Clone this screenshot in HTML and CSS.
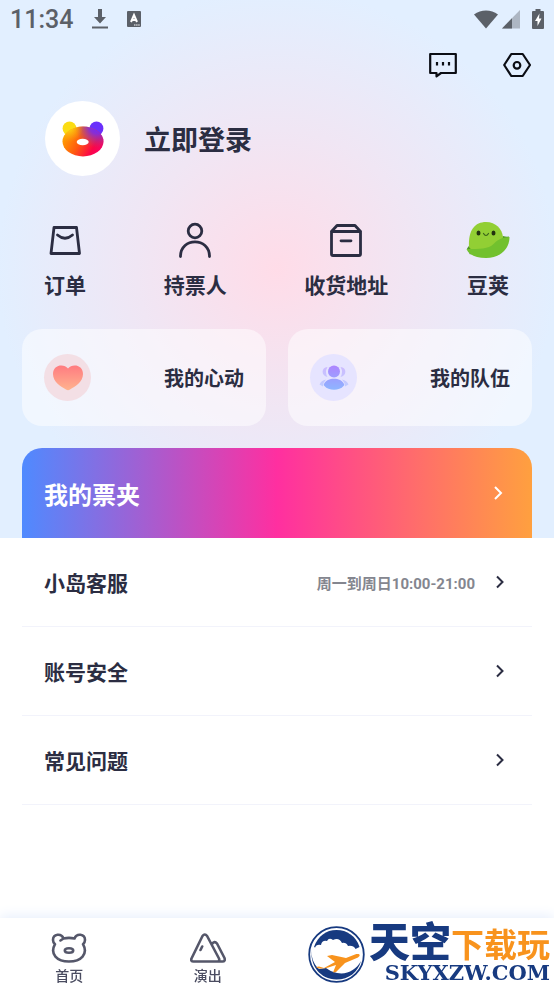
FILE: index.html
```html
<!DOCTYPE html>
<html lang="zh-CN">
<head>
    <meta charset="UTF-8">
    <meta name="viewport" content="width=device-width, initial-scale=1.0">
    <title>我的</title>
    <link rel="stylesheet" href="styles.css">
</head>
<body>
    <main>
        <section class="hero">
            <div class="status-bar">
                <span class="clock">11:34</span>
                <svg class="status-download" width="18" height="20" viewBox="0 0 18 20" fill="#5b6068">
                    <path d="M7 0h4v8h4l-6 6.5L3 8h4zM1 17.5h16v2H1z"/>
                </svg>
                <svg width="14" height="16" viewBox="0 0 14 16">
                    <rect width="14" height="16" rx="1" fill="#5b6068"/>
                    <path d="M4 11L7 4l3 7M5 9h4" fill="none" stroke="#fff" stroke-width="2"/>
                    <path d="M7 14h6" stroke="#fff" stroke-width="1" stroke-dasharray="1.5 .6"/>
                </svg>
                <div class="status-right">
                    <svg width="24" height="19" viewBox="0 0 24 19" fill="#5b6068">
                        <path d="M0 4.500C7-1 17-1 24 4.500L12 18.500z"/>
                    </svg>
                    <svg class="status-signal" width="18" height="19" viewBox="0 0 18 19">
                        <path d="M18 0v18.5H0z" fill="#adb6c3"/>
                        <path d="M10 8.2v10.3H0z" fill="#5b6068"/>
                    </svg>
                    <svg width="12" height="20" viewBox="0 0 12 20">
                        <path d="M3.5 0h5v2H11q1 0 1 1v16q0 1-1 1H1q-1 0-1-1V3q0-1 1-1h2.500z" fill="#5b6068"/>
                        <path d="M7.500 4.500L3 12h2.500v5L9.500 9.500H7z" fill="#fff"/>
                    </svg>
                </div>
            </div>

            <div class="toolbar">
                <button class="icon-btn" aria-label="消息">
                    <svg width="28" height="26" viewBox="0 0 28 26" fill="none" stroke="#0b0d14" stroke-width="2.200">
                        <path d="M1.200 2h25.600v19H12l-4.500 3.300V21H1.200z" stroke-linejoin="round"/>
                        <path d="M8 10v3.500M14 10v3.500M20 10v3.500"/>
                    </svg>
                </button>
                <button class="icon-btn" aria-label="设置">
                    <svg width="28" height="26" viewBox="0 0 28 26" fill="none" stroke="#0b0d14" stroke-width="2.200" stroke-linejoin="round">
                        <path d="M8.300 2h11.400L27 13l-7.300 11H8.300L1.200 13z"/>
                        <circle cx="14" cy="13.300" r="3.300"/>
                    </svg>
                </button>
            </div>

            <a class="profile" href="#">
                <span class="avatar">
                    <svg width="42" height="36" viewBox="0 0 42 36">
                        <defs>
                            <linearGradient id="bear" x1="0" y1=".4" x2="1" y2=".8">
                                <stop offset="0" stop-color="#ffa000"/>
                                <stop offset=".4" stop-color="#ff5a10"/>
                                <stop offset=".75" stop-color="#fb0648"/>
                                <stop offset="1" stop-color="#f8006c"/>
                            </linearGradient>
                            <radialGradient id="bear-top" gradientUnits="userSpaceOnUse" cx="35" cy="5" r="22">
                                <stop offset="0" stop-color="#6a2cff"/>
                                <stop offset=".35" stop-color="#7a2ee8" stop-opacity=".9"/>
                                <stop offset="1" stop-color="#a04a80" stop-opacity="0"/>
                            </radialGradient>
                            <radialGradient id="bear-left" gradientUnits="userSpaceOnUse" cx="7" cy="7" r="14">
                                <stop offset="0" stop-color="#fbdc14"/>
                                <stop offset="1" stop-color="#fbb014" stop-opacity="0"/>
                            </radialGradient>
                        </defs>
                        <circle cx="7.500" cy="7.500" r="6.900" fill="#fbdc14"/>
                        <circle cx="34.500" cy="7.500" r="6.900" fill="#6a30fb"/>
                        <ellipse cx="21" cy="20.500" rx="20.500" ry="15" fill="url(#bear)"/>
                        <ellipse cx="21" cy="20.500" rx="20.500" ry="15" fill="url(#bear-top)"/>
                        <ellipse cx="21" cy="20.500" rx="20.500" ry="15" fill="url(#bear-left)"/>
                        <ellipse cx="20.700" cy="21" rx="6" ry="3.300" fill="#fff"/>
                    </svg>
                </span>
                <span class="profile-name">立即登录</span>
            </a>

            <nav class="shortcuts">
                <a class="shortcut" href="#">
                    <svg width="36" height="36" viewBox="0 0 36 36" fill="none" stroke="#2b2d42" stroke-width="2.800" stroke-linecap="round" stroke-linejoin="round">
                        <path d="M7 5.500h22.500L32.500 31.500H4z"/>
                        <path d="M10.500 13q7.500 6.500 15 0"/>
                    </svg>
                    订单
                </a>
                <a class="shortcut" href="#">
                    <svg width="36" height="36" viewBox="0 0 36 36" fill="none" stroke="#2b2d42" stroke-width="2.800" stroke-linecap="round">
                        <circle cx="18" cy="9" r="6.800"/>
                        <path d="M3.500 34.500c0-19.500 29-19.500 29 0"/>
                    </svg>
                    持票人
                </a>
                <a class="shortcut" href="#">
                    <svg width="36" height="36" viewBox="0 0 36 36" fill="none" stroke="#2b2d42" stroke-width="2.800" stroke-linecap="round" stroke-linejoin="round">
                        <path d="M3.500 9.500h29V32q0 1.500-1.500 1.500H5q-1.500 0-1.500-1.500zL9 3.500h18l5.500 6M13 18.800h10"/>
                    </svg>
                    收货地址
                </a>
                <a class="shortcut" href="#">
                    <svg width="44" height="36" viewBox="0 0 44 36">
                        <path d="M1 26.500l3-4 8 5-8 5z" fill="#4f9626"/>
                        <path d="M34 20l3-6q3 1 6 .5L40 26z" fill="#4f9626"/>
                        <path d="M3 25C2 8 9 0 20 0c10 0 16 7 17 15L32 30 8 31z" fill="#92cf34"/>
                        <path d="M.5 27c13 0 22 0 27-5 5-5 9-6.500 16-7C43.500 28 33 36 20 36 10 36 3 33 .5 27z" fill="#72c12e"/>
                        <ellipse cx="12.500" cy="11" rx="2" ry="2.500" fill="#23320f"/>
                        <ellipse cx="27.500" cy="11" rx="2" ry="2.500" fill="#23320f"/>
                        <path d="M17.500 11.500q2.500 4 5 0" fill="none" stroke="#3a641b" stroke-width="1.200" stroke-linecap="round"/>
                    </svg>
                    豆荚
                </a>
            </nav>

            <div class="cards">
                <a class="card" href="#">
                    <span class="card-icon card-icon-heart">
                        <svg width="30" height="26" viewBox="0 0 30 26">
                            <defs>
                                <linearGradient id="heart" x1="0" y1="0" x2="0" y2="1">
                                    <stop offset="0" stop-color="#ff7b80"/>
                                    <stop offset="1" stop-color="#ffb38f"/>
                                </linearGradient>
                            </defs>
                            <path d="M15 3.500C19-1.500 30-.5 30 9c0 8-8 12.500-13 15.500q-2 1.300-4 0C8 21.500 0 17 0 9 0-.5 11-1.500 15 3.500z" fill="url(#heart)"/>
                        </svg>
                    </span>
                    我的心动
                </a>
                <a class="card" href="#">
                    <span class="card-icon card-icon-team">
                        <svg width="30" height="25" viewBox="0 0 30 25">
                            <defs>
                                <linearGradient id="team" gradientUnits="userSpaceOnUse" x1="0" y1="0" x2="0" y2="25">
                                    <stop offset="0" stop-color="#ae84ff"/>
                                    <stop offset="1" stop-color="#8db6ff"/>
                                </linearGradient>
                            </defs>
                            <g fill="url(#team)">
                                <g opacity=".45">
                                    <path d="M8.500 2C2 2 2 11 8.500 12Q5.500 7 8.500 2zM21.500 2C28 2 28 11 21.500 12q3-5 0-10zM7 14.500q-5 1-6.500 5l3.500 2q0-4 3-7zM23 14.500q5 1 6.500 5l-3.500 2q0-4-3-7z"/>
                                </g>
                                <circle cx="15" cy="6.500" r="6"/>
                                <path d="M5 19c3-7 17-7 20 0q.500 1-.5 2c-4 5-15 5-19 0q-1-1-.5-2z"/>
                            </g>
                        </svg>
                    </span>
                    我的队伍
                </a>
            </div>

            <a class="tickets" href="#">
                我的票夹
                <svg class="chevron" width="10" height="14" viewBox="0 0 10 14"><path d="M1 1l6 6-6 6"/></svg>
            </a>
        </section>

        <section class="menu">
            <a class="menu-row" href="#">
                小岛客服
                <span class="menu-note">周一到周日10:00-21:00</span>
                <svg class="chevron" width="10" height="14" viewBox="0 0 10 14"><path d="M2 1.500L7.500 7 2 12.500"/></svg>
            </a>
            <a class="menu-row" href="#">
                账号安全
                <svg class="chevron" width="10" height="14" viewBox="0 0 10 14"><path d="M2 1.500L7.500 7 2 12.500"/></svg>
            </a>
            <a class="menu-row" href="#">
                常见问题
                <svg class="chevron" width="10" height="14" viewBox="0 0 10 14"><path d="M2 1.500L7.500 7 2 12.500"/></svg>
            </a>
        </section>
    </main>

    <footer class="tab-bar">
        <a class="tab" href="#">
            <svg width="36" height="30" viewBox="0 0 36 30" fill="none" stroke="#55576a" stroke-width="2.600" stroke-linecap="round" stroke-linejoin="round">
                <path d="M12.500 5.500C10.500 0 2 .500 2 7q0 2.500 2 4.200C-1.500 21 6 28.500 18 28.500S37.500 21 32 11.200Q34 9.500 34 7C34 .500 25.500 0 23.500 5.500q-5.500-1.200-11 0L9.500 7.500"/>
                <ellipse cx="18" cy="17.500" rx="4.200" ry="2.300"/>
            </svg>
            首页
        </a>
        <a class="tab" href="#">
            <svg width="36" height="30" viewBox="0 0 36 30" fill="none" stroke="#55576a" stroke-width="2.600" stroke-linecap="round" stroke-linejoin="round">
                <path d="M12.500 3q2.300-3 4.600 0L29 25.500q1 3-2 3H3.500q-3 0-2-3zM22 11q2.500-3.500 5-.5l7.500 14.500q1 3.500-2 3.500H27M10.500 17l1.700-3.500"/>
            </svg>
            演出
        </a>
        <a class="brand" href="#">
            <svg width="57" height="57" viewBox="0 0 57 57">
                <circle cx="28.500" cy="28.500" r="27.300" fill="#fff" stroke="#173a80" stroke-width="1.800"/>
                <path d="M6 21C10 10 18 4 28.500 4S48 10 51.500 21l-6 3H12z" fill="#173a80"/>
                <path d="M7 22q1-4 6-3 1-5 6-4 2-4 6-1 6-3 9 3 4-1 6 3 6-1 8 4l-6 5H18q-6-1-11-7z" fill="#fff"/>
                <path d="M3.500 23C2 40 12 53 28.500 53.500 41 53.500 50 46 53 35c-5 9-14 14-24 12-5-1-8-3-11-5l-7 1C5 38 3 30 3.500 23z" fill="#173a80"/>
                <path d="M8 41l3-.5 5 1.500 11-6-8-6 5-1 14 3 9-3.500c5-1.500 6 1 3 3l-13 5.500-9 9-3 .5 3-7.500c-8 3-16 5-20 2z" fill="#f8931d"/>
            </svg>
            <span class="brand-text">
                <span class="brand-name"><span>天空</span><span class="brand-sub">下载玩</span></span>
                <span class="brand-url">SKYXZW.COM</span>
            </span>
        </a>
    </footer>
</body>
</html>
```

FILE: styles.css
```css
* {
    box-sizing: border-box;
}

body {
    font-family: Roboto, "Noto Sans CJK SC", sans-serif;
    font-weight: 700;
    margin: 0;
    min-height: 100vh;
    display: flex;
    flex-direction: column;
    background: #fff;
    color: #2b2d42;
}

main {
    flex: 1;
}

a {
    color: inherit;
    text-decoration: none;
}

svg {
    display: block;
    flex-shrink: 0;
}

.hero {
    padding: 0 22px;
    background: radial-gradient(circle at 50% 50%, #ffdce8 0, #f0e6f4 140px, #e2efff 280px);
}

.status-bar {
    display: flex;
    align-items: center;
    height: 38px;
    margin: 0 -12px;
    color: #5b6068;
}

.clock {
    font-size: 25px;
    font-weight: 500;
}

.status-download {
    margin: 0 18px;
}

.status-right {
    display: flex;
    align-items: center;
    margin-left: auto;
}

.status-signal {
    margin: 0 12px 0 4px;
}

.toolbar {
    display: flex;
    align-items: center;
    justify-content: flex-end;
    gap: 46px;
    height: 54px;
    padding-right: 1px;
}

.icon-btn {
    background: none;
    border: none;
    padding: 0;
    cursor: pointer;
}

.profile {
    display: flex;
    align-items: center;
    gap: 24px;
    margin-top: 9px;
    padding-left: 23px;
    font-size: 27px;
}

.avatar {
    display: flex;
    align-items: center;
    justify-content: center;
    width: 75px;
    height: 75px;
    border-radius: 50%;
    background: #fff;
}

.shortcuts {
    display: flex;
    justify-content: space-between;
    margin-top: 46px;
    padding: 0 22px;
}

.shortcut {
    display: flex;
    flex-direction: column;
    align-items: center;
    gap: 16px;
    font-size: 21px;
    line-height: 24px;
}

.cards {
    display: grid;
    grid-template-columns: 1fr 1fr;
    gap: 22px;
    margin-top: 31px;
}

.card {
    display: flex;
    align-items: center;
    justify-content: space-between;
    height: 97px;
    padding: 0 22px;
    border-radius: 20px;
    background: rgba(255, 255, 255, 0.5);
    font-size: 20px;
}

.card-icon {
    display: flex;
    align-items: center;
    justify-content: center;
    width: 47px;
    height: 47px;
    border-radius: 50%;
}

.card-icon-heart {
    background: #f3dfe5;
}

.card-icon-team {
    background: #e6e4ff;
}

.chevron {
    fill: none;
    stroke: currentColor;
    stroke-width: 2;
}

.tickets {
    display: flex;
    align-items: center;
    justify-content: space-between;
    height: 90px;
    margin-top: 22px;
    padding: 0 28px 0 22px;
    border-radius: 20px 20px 0 0;
    background: linear-gradient(90deg, #4f8aff, #ff2fa0 50%, #ffa03f);
    color: #fff;
    font-size: 24px;
}

.menu {
    margin: 0 22px;
}

.menu-row {
    display: flex;
    align-items: center;
    justify-content: space-between;
    height: 89px;
    padding: 0 27px 0 22px;
    border-bottom: 1px solid #f2f3fb;
    font-size: 21px;
}

.menu-note {
    margin-left: auto;
    margin-right: 20px;
    color: #84868f;
    font-size: 15px;
}

.tab-bar {
    position: sticky;
    bottom: 0;
    display: flex;
    height: 66px;
    background: #fff;
    box-shadow: 0 -2px 12px #e6eefc;
}

.tab {
    display: flex;
    flex-direction: column;
    align-items: center;
    gap: 5px;
    width: 25%;
    padding-top: 15px;
    color: #4a4c60;
    font-size: 14px;
    font-weight: 500;
    line-height: 16px;
}

.brand {
    display: flex;
    align-items: flex-end;
    justify-content: flex-end;
    gap: 4px;
    width: 50%;
    padding: 0 4px 1px 0;
    color: #173a80;
    white-space: nowrap;
}

.brand-text {
    display: flex;
    flex-direction: column;
}

.brand-name {
    display: flex;
    align-items: flex-end;
    font-size: 41px;
    font-weight: 900;
    line-height: 40px;
}

.brand-sub {
    color: #f8931d;
    font-size: 33px;
    font-weight: 700;
    line-height: 34px;
}

.brand-url {
    align-self: flex-end;
    font-family: "DejaVu Serif", serif;
    font-size: 21px;
    line-height: 20px;
}
```
